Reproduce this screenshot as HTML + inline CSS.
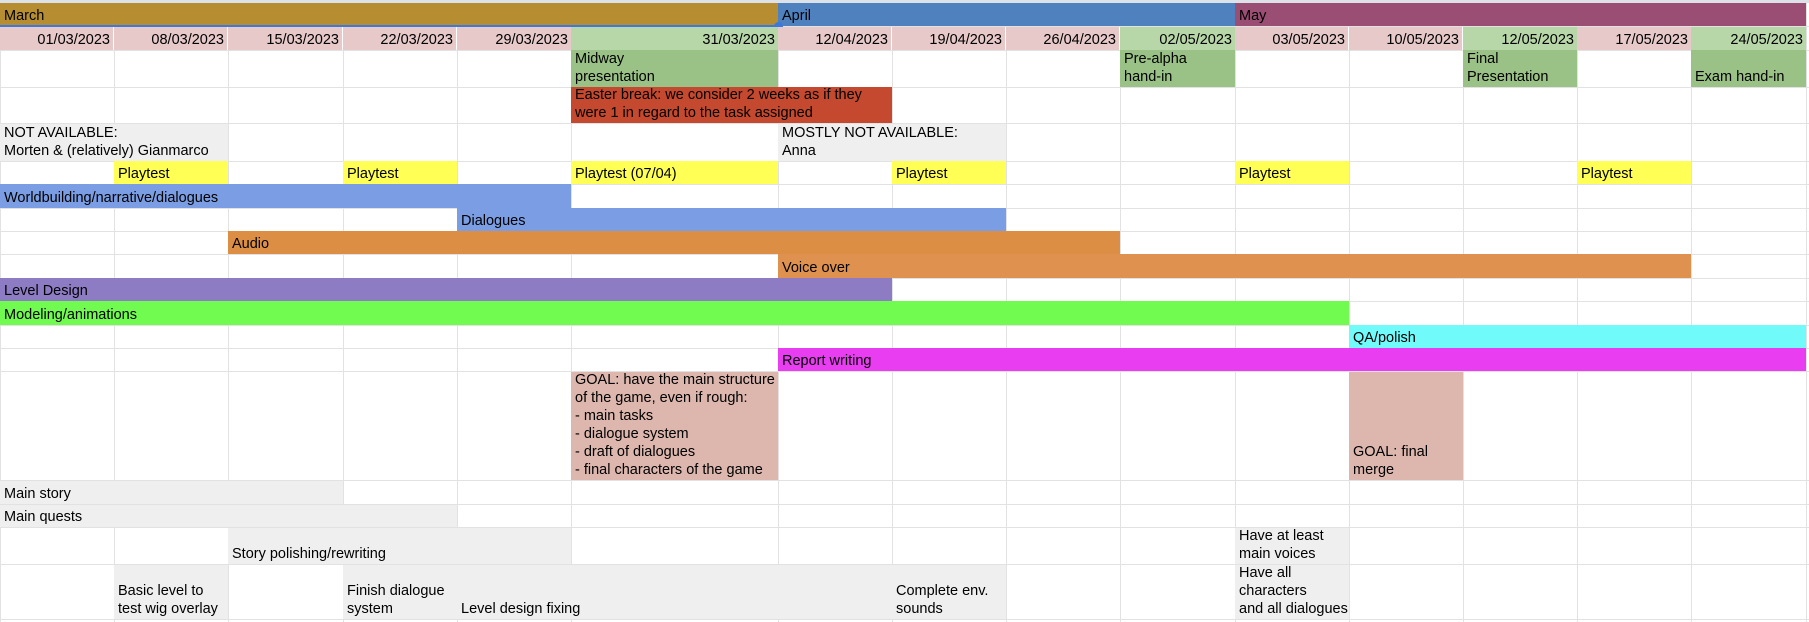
<!DOCTYPE html>
<html><head><meta charset="utf-8"><style>
body{margin:0;width:1809px;height:622px;overflow:hidden;background:#fff;font-family:"Liberation Sans",Arial,sans-serif;font-size:14.5px;color:#000;position:relative}
.g{position:absolute;background:#e2e2e2}
.c{position:absolute;box-sizing:border-box;padding:0 3px 1px 4px;display:flex;flex-direction:column;justify-content:flex-end;line-height:18px;white-space:nowrap;overflow:hidden}
.r{align-items:flex-end;padding-right:3px}
.pk{background:#e6c9c8}.gn{background:#b7d7a8}.ms{background:#9bc286}.gy{background:#efefef}.yl{background:#ffff55}
</style></head><body>
<div style="position:absolute;left:0;top:0;width:1809px;height:3px;background:#dde1e8"></div>
<script>
var xs=[0,114,228,343,457,571,778,892,1006,1120,1235,1349,1463,1577,1691,1806];
var ys=[26,50,87,123,161,184,208,231,254,278,301,325,348,371,480,504,527,564,619];
var h='';xs.forEach(function(x){h+='<div class="g" style="left:'+x+'px;top:3px;width:1px;height:619px"></div>'});
ys.forEach(function(y){h+='<div class="g" style="left:0;top:'+y+'px;width:1809px;height:1px"></div>'});
document.write(h);
</script>
<div class="c" style="left:0;top:3px;width:778px;height:23px;background:#b68d31">March</div>
<div class="c" style="left:778px;top:3px;width:457px;height:23px;background:#4f81bf">April</div>
<div class="c" style="left:1235px;top:3px;width:571px;height:23px;background:#9a4e73">May</div>
<div style="position:absolute;left:0;top:25px;width:778px;height:2px;background:#3b78e0"></div>
<div style="position:absolute;left:774px;top:22px;width:9px;height:9px;border-radius:50%;background:#3b78e0"></div>
<div class="c r pk" style="left:0;top:27px;width:113px;height:23px">01/03/2023</div>
<div class="c r pk" style="left:114px;top:27px;width:113px;height:23px">08/03/2023</div>
<div class="c r pk" style="left:228px;top:27px;width:114px;height:23px">15/03/2023</div>
<div class="c r pk" style="left:343px;top:27px;width:113px;height:23px">22/03/2023</div>
<div class="c r pk" style="left:457px;top:27px;width:114px;height:23px">29/03/2023</div>
<div class="c r gn" style="left:571px;top:27px;width:207px;height:23px">31/03/2023</div>
<div class="c r pk" style="left:778px;top:27px;width:113px;height:23px">12/04/2023</div>
<div class="c r pk" style="left:892px;top:27px;width:113px;height:23px">19/04/2023</div>
<div class="c r pk" style="left:1006px;top:27px;width:113px;height:23px">26/04/2023</div>
<div class="c r gn" style="left:1120px;top:27px;width:115px;height:23px">02/05/2023</div>
<div class="c r pk" style="left:1235px;top:27px;width:113px;height:23px">03/05/2023</div>
<div class="c r pk" style="left:1349px;top:27px;width:113px;height:23px">10/05/2023</div>
<div class="c r gn" style="left:1463px;top:27px;width:114px;height:23px">12/05/2023</div>
<div class="c r pk" style="left:1577px;top:27px;width:114px;height:23px">17/05/2023</div>
<div class="c r gn" style="left:1691px;top:27px;width:115px;height:23px">24/05/2023</div>
<div class="c ms" style="left:571px;top:50px;width:207px;height:37px"><span>Midway</span><span>presentation</span></div>
<div class="c ms" style="left:1120px;top:50px;width:115px;height:37px"><span>Pre-alpha</span><span>hand-in</span></div>
<div class="c ms" style="left:1463px;top:50px;width:114px;height:37px"><span>Final</span><span>Presentation</span></div>
<div class="c ms" style="left:1691px;top:50px;width:115px;height:37px"><span>Exam hand-in</span></div>
<div class="c" style="left:571px;top:87px;width:321px;height:36px;background:#c4492f"><span>Easter break: we consider 2 weeks as if they</span><span>were 1 in regard to the task assigned</span></div>
<div class="c gy" style="left:0;top:124px;width:228px;height:37px"><span>NOT AVAILABLE:</span><span>Morten &amp; (relatively) Gianmarco</span></div>
<div class="c gy" style="left:778px;top:124px;width:228px;height:37px"><span>MOSTLY NOT AVAILABLE:</span><span>Anna</span></div>
<div class="c yl" style="left:114px;top:161px;width:114px;height:23px">Playtest</div>
<div class="c yl" style="left:343px;top:161px;width:114px;height:23px">Playtest</div>
<div class="c yl" style="left:571px;top:161px;width:207px;height:23px">Playtest (07/04)</div>
<div class="c yl" style="left:892px;top:161px;width:114px;height:23px">Playtest</div>
<div class="c yl" style="left:1235px;top:161px;width:114px;height:23px">Playtest</div>
<div class="c yl" style="left:1577px;top:161px;width:114px;height:23px">Playtest</div>
<div class="c" style="left:0;top:184px;width:571px;height:24px;background:#7a9de3">Worldbuilding/narrative/dialogues</div>
<div class="c" style="left:457px;top:208px;width:549px;height:23px;background:#7a9de3">Dialogues</div>
<div class="c" style="left:228px;top:231px;width:892px;height:23px;background:#dc8e45">Audio</div>
<div class="c" style="left:778px;top:254px;width:913px;height:24px;background:#df9250">Voice over</div>
<div class="c" style="left:0;top:278px;width:892px;height:23px;background:#8d7cc3">Level Design</div>
<div class="c" style="left:0;top:301px;width:1349px;height:24px;background:#71fa4f">Modeling/animations</div>
<div class="c" style="left:1349px;top:325px;width:457px;height:23px;background:#70fafa">QA/polish</div>
<div class="c" style="left:778px;top:348px;width:1028px;height:23px;background:#e83df0">Report writing</div>
<div class="c" style="left:571px;top:372px;width:207px;height:108px;background:#ddb7ad"><span>GOAL: have the main structure</span><span>of the game, even if rough:</span><span>- main tasks</span><span>- dialogue system</span><span>- draft of dialogues</span><span>- final characters of the game</span></div>
<div class="c" style="left:1349px;top:372px;width:114px;height:108px;background:#ddb7ad"><span>GOAL: final</span><span>merge</span></div>
<div class="c gy" style="left:0;top:481px;width:343px;height:23px">Main story</div>
<div class="c gy" style="left:0;top:505px;width:457px;height:22px">Main quests</div>
<div class="c gy" style="left:228px;top:528px;width:343px;height:36px">Story polishing/rewriting</div>
<div class="c gy" style="left:1235px;top:528px;width:114px;height:36px"><span>Have at least</span><span>main voices</span></div>
<div class="c gy" style="left:114px;top:565px;width:114px;height:54px"><span>Basic level to</span><span>test wig overlay</span></div>
<div class="c gy" style="left:343px;top:565px;width:114px;height:54px"><span>Finish dialogue</span><span>system</span></div>
<div class="c gy" style="left:457px;top:565px;width:435px;height:54px"><span>Level design fixing</span></div>
<div class="c gy" style="left:892px;top:565px;width:114px;height:54px"><span>Complete env.</span><span>sounds</span></div>
<div class="c gy" style="left:1235px;top:565px;width:114px;height:54px"><span>Have all</span><span>characters</span><span>and all dialogues</span></div>
</body></html>
